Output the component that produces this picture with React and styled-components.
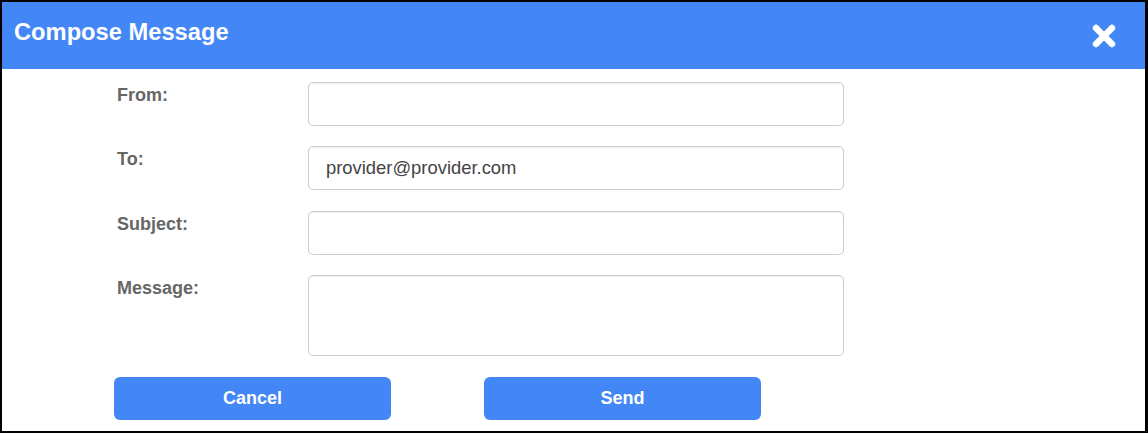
import styled, { createGlobalStyle } from "styled-components";

const GlobalStyle = createGlobalStyle`
  body {
    margin: 0;
    font-family: "Liberation Sans", Arial, sans-serif;
    background: #fff;
  }
`;

const Dialog = styled.div`
  width: 1148px;
  height: 433px;
  box-sizing: border-box;
  border: 2px solid #000;
  border-right-width: 3px;
  background: #fff;
  overflow: hidden;
`;

const Header = styled.div`
  height: 67px;
  box-sizing: border-box;
  background: #4287f5;
  display: flex;
  justify-content: space-between;
  align-items: flex-start;
  padding: 17px 28px 0 12px;
`;

const Title = styled.h2`
  margin: 0;
  color: #fff;
  font-size: 23.7px;
  line-height: 27px;
  font-weight: bold;
`;

const Close = styled.button`
  margin-top: 4px;
  padding: 0;
  border: 0;
  background: none;
  width: 26px;
  height: 26px;
  cursor: pointer;
  display: block;
`;

const Body = styled.div`
  padding: 13px 0 0 112px;
`;

const Form = styled.div`
  display: grid;
  grid-template-columns: 194px 536px;
  row-gap: 20.4px;
`;

const Label = styled.label`
  padding: 3px 0 0 3px;
  font-size: 18px;
  font-weight: bold;
  color: #666;
`;

const Field = styled.input`
  height: 44px;
  width: 100%;
  box-sizing: border-box;
  border: 1px solid #ccc;
  border-radius: 5px;
  box-shadow: inset 0 1px 1px rgba(0, 0, 0, 0.075);
  padding: 0 17px;
  font: 18.4px "Liberation Sans", Arial, sans-serif;
  color: #444;
  outline: none;
`;

const Area = styled.textarea`
  height: 81px;
  width: 100%;
  box-sizing: border-box;
  border: 1px solid #ccc;
  border-radius: 5px;
  box-shadow: inset 0 1px 1px rgba(0, 0, 0, 0.075);
  padding: 10px 17px;
  font: 18.4px "Liberation Sans", Arial, sans-serif;
  color: #444;
  resize: none;
  outline: none;
  display: block;
`;

const Actions = styled.div`
  display: flex;
  gap: 93px;
  margin-top: 21px;
`;

const Button = styled.button`
  width: 277px;
  height: 43px;
  border: 0;
  border-radius: 6px;
  background: #4287f5;
  color: #fff;
  font: bold 18px "Liberation Sans", Arial, sans-serif;
  cursor: pointer;
`;

const CloseIcon = () => (
  <svg width="26" height="26" viewBox="0 0 26 26">
    <g stroke="#fff" strokeWidth="6.4" strokeLinecap="round">
      <line x1="5" y1="5" x2="21" y2="21" />
      <line x1="21" y1="5" x2="5" y2="21" />
    </g>
  </svg>
);

const App = () => {
  return (
    <>
      <GlobalStyle />
      <Dialog>
        <Header>
          <Title>Compose Message</Title>
          <Close aria-label="Close">
            <CloseIcon />
          </Close>
        </Header>
        <Body>
          <Form>
            <Label>From:</Label>
            <Field type="text" />
            <Label>To:</Label>
            <Field type="text" defaultValue="provider@provider.com" />
            <Label>Subject:</Label>
            <Field type="text" />
            <Label>Message:</Label>
            <Area />
          </Form>
          <Actions>
            <Button>Cancel</Button>
            <Button>Send</Button>
          </Actions>
        </Body>
      </Dialog>
    </>
  );
};

export default App;
